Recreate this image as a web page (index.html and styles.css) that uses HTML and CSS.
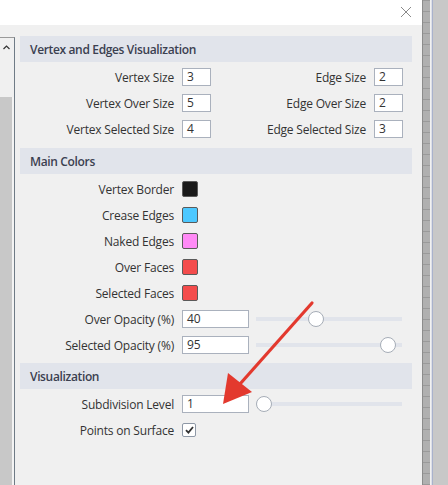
FILE: index.html
```html
<!DOCTYPE html>
<html>
<head>
<meta charset="utf-8">
<link rel="stylesheet" href="styles.css">
</head>
<body>
<div class="screen">
  <div class="dialog">
    <div class="titlebar">
      <svg class="close" width="12" height="12" viewBox="0 0 12 12"><path d="M1 1L11 11M11 1L1 11" stroke="#8a8a8a" stroke-width="1" fill="none"/></svg>
    </div>
    <div class="main">
      <div class="sidebar">
        <div class="sidebar-top">
          <svg class="chevron" width="7" height="5" viewBox="0 0 7 5"><path d="M0.5 4L3.5 1L6.5 4" stroke="#333" stroke-width="1.2" fill="none"/></svg>
        </div>
        <div class="sidebar-fill"></div>
      </div>
      <div class="panel">
        <section class="section">
          <div class="header">Vertex and Edges Visualization</div>
          <div class="grid4">
            <label class="lbl">Vertex Size</label><div class="input small">3</div>
            <label class="lbl">Edge Size</label><div class="input small">2</div>
            <label class="lbl">Vertex Over Size</label><div class="input small">5</div>
            <label class="lbl">Edge Over Size</label><div class="input small">2</div>
            <label class="lbl">Vertex Selected Size</label><div class="input small">4</div>
            <label class="lbl">Edge Selected Size</label><div class="input small">3</div>
          </div>
        </section>
        <section class="section">
          <div class="header">Main Colors</div>
          <div class="grid2">
            <label class="lbl">Vertex Border</label><div class="cell"><span class="swatch black"></span></div>
            <label class="lbl">Crease Edges</label><div class="cell"><span class="swatch blue"></span></div>
            <label class="lbl">Naked Edges</label><div class="cell"><span class="swatch pink"></span></div>
            <label class="lbl">Over Faces</label><div class="cell"><span class="swatch red"></span></div>
            <label class="lbl">Selected Faces</label><div class="cell"><span class="swatch red"></span></div>
            <label class="lbl">Over Opacity (%)</label>
            <div class="cell"><div class="input wide">40</div><div class="slider"><span class="thumb" style="left: calc((100% - 16px) * 0.40)"></span></div></div>
            <label class="lbl">Selected Opacity (%)</label>
            <div class="cell"><div class="input wide">95</div><div class="slider"><span class="thumb" style="left: calc((100% - 16px) * 0.95)"></span></div></div>
          </div>
        </section>
        <section class="section">
          <div class="header">Visualization</div>
          <div class="grid2">
            <label class="lbl">Subdivision Level</label>
            <div class="cell"><div class="input wide">1</div><div class="slider"><span class="thumb" style="left: 0"></span></div></div>
            <label class="lbl">Points on Surface</label>
            <div class="cell"><span class="checkbox"><svg width="9" height="8" viewBox="0 0 9 8"><path d="M1 4.2L3.4 6.6L8 1" stroke="#333" stroke-width="1.8" fill="none"/></svg></span></div>
          </div>
        </section>
      </div>
    </div>
  </div>
  <div class="scrollstrip"></div>
  <div class="stripedge"></div>
  <div class="backdrop"></div>
  <svg class="annotation" width="448" height="485" viewBox="0 0 448 485">
    <line x1="312" y1="303" x2="240" y2="384" stroke="#e3392e" stroke-width="3.2" stroke-linecap="round"/>
    <polygon points="223,404 228,373 252,392" fill="#e3392e"/>
  </svg>
</div>
</body>
</html>
```

FILE: styles.css
```css
* { box-sizing: border-box; }
html, body { margin: 0; padding: 0; }
body {
  width: 448px;
  height: 485px;
  overflow: hidden;
  font-family: "Open Sans", "Noto Sans", sans-serif;
  font-size: 12px;
  color: #333333;
  background: #c8c8c8;
}
.screen {
  position: relative;
  display: flex;
  width: 448px;
  height: 485px;
}
.dialog {
  width: 422px;
  display: flex;
  flex-direction: column;
  background: #f0f0f0;
}
.titlebar {
  height: 25px;
  background: #ffffff;
  display: flex;
  justify-content: flex-end;
  align-items: center;
  padding-right: 10px;
}
.close { display: block; margin-top: -1px; }
.main {
  flex: 1;
  display: flex;
}
.sidebar {
  width: 15px;
  margin-top: 12px;
  border-top: 1px solid #9a9a9a;
  border-right: 1px solid #6f7b86;
  display: flex;
  flex-direction: column;
}
.sidebar-top {
  height: 59px;
  padding: 7px 0 0 3px;
}
.chevron { display: block; }
.sidebar-fill {
  flex: 1;
  background: #c8c8c8;
  border-right: 2px solid #f4f4f4;
}
.panel {
  flex: 1;
  padding: 11px 10px 0 5px;
}
.header {
  height: 26px;
  background: #e1e4eb;
  padding-left: 10px;
  display: flex;
  align-items: center;
  font-weight: 600;
  letter-spacing: -0.35px;
  color: #3b4050;
}
.section > .grid4, .section > .grid2 {
  padding: 2px 0 5px;
}
.section:first-child > .grid4 { padding-bottom: 6px; }
.grid4 {
  display: grid;
  grid-template-columns: 154px 29px 147px 29px;
  grid-auto-rows: 26px;
  column-gap: 8px;
  align-items: center;
}
.grid2 {
  display: grid;
  grid-template-columns: 154px 1fr;
  grid-auto-rows: 26px;
  column-gap: 8px;
  align-items: center;
}
.lbl {
  text-align: right;
  white-space: nowrap;
  letter-spacing: -0.2px;
  color: #333333;
}
.input {
  height: 18px;
  background: #ffffff;
  border: 1px solid #aab1bd;
  padding-left: 4px;
  line-height: 16px;
  color: #333;
}
.input.small { width: 29px; }
.input.wide { width: 67px; flex: none; }
.cell {
  display: flex;
  align-items: center;
  height: 26px;
}
.swatch {
  display: block;
  width: 16px;
  height: 16px;
  border: 1px solid #5a5a5a;
  border-radius: 2px;
}
.swatch.black { background: #1a1a1a; }
.swatch.blue { background: #4cc8ff; }
.swatch.pink { background: #ff8af6; }
.swatch.red { background: #f34b4b; }
.slider {
  position: relative;
  margin-left: 7px;
  width: 146px;
  height: 4px;
  background: #e1e4eb;
}
.thumb {
  position: absolute;
  top: -6px;
  width: 16px;
  height: 16px;
  border-radius: 50%;
  background: #ffffff;
  border: 1px solid #a6adb7;
}
.checkbox {
  width: 14px;
  height: 14px;
  border: 1px solid #8e98a6;
  border-radius: 2px;
  background: #fff;
  display: flex;
  align-items: center;
  justify-content: center;
}
.checkbox svg { display: block; }
.scrollstrip {
  width: 8px;
  background-color: #a8a8a8;
  background-image: repeating-linear-gradient(to bottom, #9a9a9a 0, #9a9a9a 1px, #b0b0b0 1px, #b0b0b0 11px);
  border-left: 1px solid #8c8c8c;
}
.stripedge {
  width: 3px;
  background: #dcdfe8;
  border-left: 1px solid #f2f2f2;
  border-right: 1px solid #a9b2cc;
}
.backdrop {
  flex: 1;
  background: #c8c8c8;
}
.annotation {
  position: absolute;
  left: 0;
  top: 0;
  pointer-events: none;
}
```
